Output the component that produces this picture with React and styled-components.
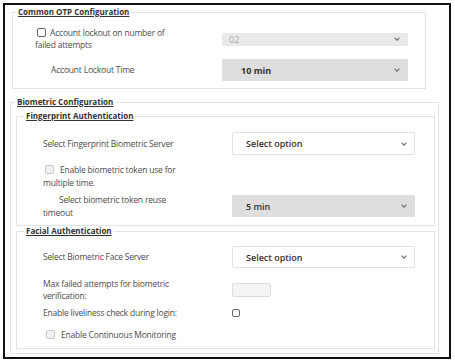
import styled, { createGlobalStyle } from 'styled-components';

const Global = createGlobalStyle`
    body {
        margin: 0;
        background: #fff;
        font-family: "Open Sans", "Noto Sans", sans-serif;
    }
`;

function Chevron() {
    return (
        <svg width="6" height="4" viewBox="0 0 6 4">
            <polyline points="0.6,0.6 3,3.2 5.4,0.6" fill="none" stroke="#777" strokeWidth="1.3" />
        </svg>
    );
}

export default function App() {
    return (
        <>
            <Global />
            <Frame>
                <Fieldset $ml={7} $w={414} $mt={2}>
                    <Legend $off={3}>Common OTP Configuration</Legend>
                    <Body $pl={22} $pt={10} $pb={7} $gap={8}>
                        <Row $cols="187px 186px" $h={24}>
                            <Label>
                                <Check $m="0 4px 0 2px" />Account lockout on number of failed attempts
                            </Label>
                            <Select $h={13} $bg="#e9e9e9" $border="transparent" $pl={6} $color="#aaa" $weight={400}>
                                <span>02</span>
                                <Chevron />
                            </Select>
                        </Row>
                        <Row $cols="187px 186px" $h={22}>
                            <Label $indent={16}>Account Lockout Time</Label>
                            <Select $h={22} $bg="#dedede" $border="transparent" $pl={18} $color="#333" $weight={700}>
                                <span>10 min</span>
                                <Chevron />
                            </Select>
                        </Row>
                    </Body>
                </Fieldset>

                <Fieldset $ml={5} $w={429} $mt={8}>
                    <Legend $off={4}>Biometric Configuration</Legend>
                    <Body $pl={5} $pt={4} $pb={4} $gap={0}>
                        <Fieldset $ml={0} $w={419} $mt={0}>
                            <Legend $off={7}>Fingerprint Authentication</Legend>
                            <Body $pl={26} $pt={11} $pb={6} $gap={0}>
                                <Row $cols="189px 183px" $h={23}>
                                    <Label>Select Fingerprint Biometric Server</Label>
                                    <Select $h={23} $bg="#fff" $border="#e2e2e2" $pl={13} $color="#333" $weight={600}>
                                        <span>Select option</span>
                                        <Chevron />
                                    </Select>
                                </Row>
                                <Row $cols="189px 183px" $h={26} $mt={8}>
                                    <Label $lh={13}>
                                        <Check $m="0 6px 0 2px" $disabled />Enable biometric token use for multiple time.
                                    </Label>
                                </Row>
                                <Row $cols="189px 183px" $h={26} $mt={4}>
                                    <Label $indent={16} $lh={13}>Select biometric token reuse timeout</Label>
                                    <Select $h={22} $bg="#dedede" $border="transparent" $pl={13} $color="#333" $weight={600}>
                                        <span>5 min</span>
                                        <Chevron />
                                    </Select>
                                </Row>
                            </Body>
                        </Fieldset>

                        <Fieldset $ml={0} $w={419} $mt={0}>
                            <Legend $off={7}>Facial Authentication</Legend>
                            <Body $pl={26} $pt={10} $pb={7} $gap={0}>
                                <Row $cols="189px 183px" $h={22}>
                                    <Label>Select Biometric Face Server</Label>
                                    <Select $h={22} $bg="#fff" $border="#e2e2e2" $pl={13} $color="#333" $weight={600}>
                                        <span>Select option</span>
                                        <Chevron />
                                    </Select>
                                </Row>
                                <Row $cols="189px 183px" $h={24} $mt={10}>
                                    <Label $lh={12}>Max failed attempts for biometric verification:</Label>
                                    <SmallInput />
                                </Row>
                                <Row $cols="189px 183px" $h={12} $mt={5}>
                                    <Label $lh={12}>Enable liveliness check during login:</Label>
                                    <Check $m="0" $size={8} />
                                </Row>
                                <Row $cols="189px 183px" $h={12} $mt={10}>
                                    <Label $lh={12}>
                                        <Check $m="0 6px 0 3px" $disabled />Enable Continuous Monitoring
                                    </Label>
                                </Row>
                            </Body>
                        </Fieldset>
                    </Body>
                </Fieldset>
            </Frame>
        </>
    );
}

const Frame = styled.div`
    box-sizing: border-box;
    margin: 3px 0 0 3px;
    width: 448px;
    height: 356px;
    border: 2px solid #111;
    background: #fff;
    overflow: hidden;
`;

const Fieldset = styled.fieldset`
    box-sizing: border-box;
    margin: ${({ $mt }) => $mt}px 0 0 ${({ $ml }) => $ml}px;
    width: ${({ $w }) => $w}px;
    padding: 0;
    border: 1px solid #e4e4e4;
    min-width: 0;
`;

const Legend = styled.legend`
    margin-left: ${({ $off }) => $off}px;
    padding: 0 2px;
    font-size: 8px;
    line-height: 10px;
    font-weight: 700;
    color: #333;
    text-decoration: underline;
`;

const Body = styled.div`
    display: flex;
    flex-direction: column;
    gap: ${({ $gap }) => $gap}px;
    padding: ${({ $pt }) => $pt}px 0 ${({ $pb }) => $pb}px ${({ $pl }) => $pl}px;
`;

const Row = styled.div`
    display: grid;
    grid-template-columns: ${({ $cols }) => $cols};
    align-items: center;
    min-height: ${({ $h }) => $h}px;
    margin-top: ${({ $mt }) => $mt || 0}px;
`;

const Label = styled.div`
    max-width: 148px;
    font-size: 8.5px;
    line-height: ${({ $lh }) => $lh || 12}px;
    color: #4d4d4d;
    text-indent: ${({ $indent }) => $indent || 0}px;
    letter-spacing: -0.2px;
`;

const Check = styled.span`
    display: inline-block;
    box-sizing: border-box;
    width: ${({ $size }) => $size || 9}px;
    height: ${({ $size }) => $size || 9}px;
    margin: ${({ $m }) => $m};
    vertical-align: -1px;
    text-indent: 0;
    border: 1px solid ${({ $disabled }) => ($disabled ? '#c8c8c8' : '#666')};
    border-radius: 2px;
    background: ${({ $disabled }) => ($disabled ? '#f2f2f2' : '#fff')};
`;

const Select = styled.div`
    box-sizing: border-box;
    display: flex;
    align-items: center;
    justify-content: space-between;
    height: ${({ $h }) => $h}px;
    padding: 0 7px 0 ${({ $pl }) => $pl}px;
    background: ${({ $bg }) => $bg};
    border: 1px solid ${({ $border }) => $border};
    border-radius: 1px;
    font-size: 9px;
    font-weight: ${({ $weight }) => $weight};
    color: ${({ $color }) => $color};
`;

const SmallInput = styled.div`
    box-sizing: border-box;
    width: 39px;
    height: 14px;
    background: #f4f4f4;
    border: 1px solid #dcdcdc;
    border-radius: 2px;
`;
